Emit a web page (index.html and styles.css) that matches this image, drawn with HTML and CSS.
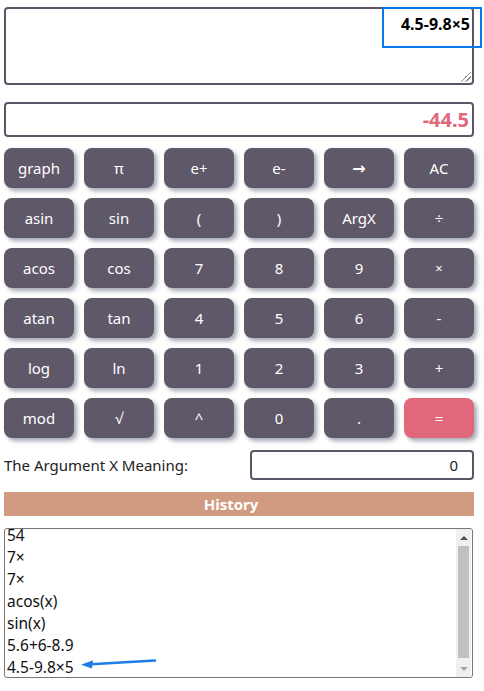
FILE: index.html
```html
<!DOCTYPE html>
<html>
<head>
<meta charset="utf-8">
<link rel="stylesheet" href="styles.css">
</head>
<body>
<div class="app">
  <div class="expr-wrap">
    <div class="expr">4.5-9.8×5<span class="grip"></span></div>
    <div class="highlight"></div>
  </div>
  <div class="result">-44.5</div>
  <div class="keys">
    <button class="key">graph</button>
    <button class="key">π</button>
    <button class="key">e+</button>
    <button class="key">e-</button>
    <button class="key arrow-key">→</button>
    <button class="key">AC</button>
    <button class="key">asin</button>
    <button class="key">sin</button>
    <button class="key">(</button>
    <button class="key">)</button>
    <button class="key">ArgX</button>
    <button class="key">÷</button>
    <button class="key">acos</button>
    <button class="key">cos</button>
    <button class="key">7</button>
    <button class="key">8</button>
    <button class="key">9</button>
    <button class="key small">×</button>
    <button class="key">atan</button>
    <button class="key">tan</button>
    <button class="key">4</button>
    <button class="key">5</button>
    <button class="key">6</button>
    <button class="key">-</button>
    <button class="key">log</button>
    <button class="key">ln</button>
    <button class="key">1</button>
    <button class="key">2</button>
    <button class="key">3</button>
    <button class="key">+</button>
    <button class="key">mod</button>
    <button class="key">√</button>
    <button class="key">^</button>
    <button class="key">0</button>
    <button class="key">.</button>
    <button class="key eq">=</button>
  </div>
  <div class="arg-row">
    <span class="arg-label">The Argument X Meaning:</span>
    <div class="arg-input">0</div>
  </div>
  <div class="history-bar">History</div>
  <div class="history">
    <div class="items">
      <div class="item">54</div>
      <div class="item">7×</div>
      <div class="item">7×</div>
      <div class="item">acos(x)</div>
      <div class="item">sin(x)</div>
      <div class="item">5.6+6-8.9</div>
      <div class="item">4.5-9.8×5</div>
    </div>
    <div class="scrollbar">
      <div class="sb-btn"><span class="tri up"></span></div>
      <div class="sb-track"><div class="sb-thumb"></div></div>
      <div class="sb-btn"><span class="tri down"></span></div>
    </div>
    <svg class="arrow" width="80" height="14" viewBox="0 0 80 14">
      <path d="M76 3.5 L12 7.2" stroke="#1e7de6" stroke-width="2.4" stroke-linecap="round" fill="none"/>
      <path d="M2 7.8 L14 3.2 L13 11.6 Z" fill="#1e7de6"/>
    </svg>
  </div>
</div>
</body>
</html>
```
FILE: styles.css
```css
* { box-sizing: border-box; }
html, body { margin: 0; padding: 0; background: #fff; }
body { font-family: "Noto Sans", "Open Sans", sans-serif; }
.app {
  width: 470px;
  margin: 7px 0 0 4px;
  display: flex;
  flex-direction: column;
}
.expr-wrap { position: relative; }
.expr {
  height: 78px;
  border: 2px solid #5c5566;
  border-radius: 4px;
  text-align: right;
  padding: 4px 2px 0 0;
  font-weight: 700;
  font-size: 16px;
  line-height: 22px;
  color: #000;
  position: relative;
}
.grip {
  position: absolute;
  right: 1px;
  bottom: 1px;
  width: 10px;
  height: 10px;
  background: linear-gradient(135deg, transparent 45%, #888 45%, #888 52%, transparent 52%, transparent 68%, #888 68%, #888 75%, transparent 75%);
}
.highlight {
  position: absolute;
  left: 378px;
  top: 0;
  width: 100px;
  height: 41px;
  border: 2.5px solid #0a78e8;
}
.result {
  margin-top: 17px;
  height: 35px;
  border: 2px solid #5c5566;
  border-radius: 4px;
  text-align: right;
  padding: 2px 3px 0 0;
  font-weight: 700;
  font-size: 20px;
  line-height: 28px;
  color: #e0687a;
}
.keys {
  margin-top: 11px;
  display: grid;
  grid-template-columns: repeat(6, 70px);
  grid-auto-rows: 40px;
  gap: 10px;
}
.key {
  border: none;
  margin: 0;
  padding: 0;
  background: #5f5868;
  color: #fff;
  font-family: "Noto Sans", "Open Sans", sans-serif;
  font-size: 15px;
  border-radius: 8px;
  box-shadow: 3px 3px 4px rgba(90, 100, 120, 0.55);
}
.key.small { font-size: 13px; }
.key.arrow-key { font-family: "DejaVu Sans", sans-serif; font-size: 16px; font-weight: 700; }
.key.eq { background: #e0687a; }
.arg-row {
  margin-top: 12px;
  display: flex;
  align-items: center;
  justify-content: space-between;
}
.arg-label {
  font-size: 15px;
  color: #222;
}
.arg-input {
  width: 224px;
  height: 30px;
  border: 2px solid #5c5566;
  border-radius: 4px;
  text-align: right;
  padding: 2px 14px 0 0;
  font-size: 15px;
  line-height: 22px;
  color: #222;
}
.history-bar {
  margin-top: 12px;
  height: 24px;
  background: #d09b80;
  color: #fff;
  font-weight: 700;
  font-size: 15px;
  line-height: 24px;
  text-align: center;
  padding-right: 16px;
}
.history {
  margin-top: 12px;
  width: 469px;
  height: 150px;
  border: 1px solid #777;
  border-radius: 3px;
  display: flex;
  overflow: hidden;
  position: relative;
}
.items {
  flex: 1;
  margin-top: -5px;
  padding-left: 2px;
}
.item {
  height: 22px;
  font-size: 15.5px;
  line-height: 22px;
  color: #111;
}
.scrollbar {
  width: 15px;
  margin: 0 1px 0 0;
  background: #f0f0f0;
  display: flex;
  flex-direction: column;
}
.sb-btn {
  height: 17px;
  display: flex;
  align-items: center;
  justify-content: center;
}
.sb-track { flex: 1; display: flex; padding: 0 2px; }
.sb-thumb { flex: 1; background: #c1c1c1; margin: 0 0 2px; }
.tri { width: 0; height: 0; border-left: 4px solid transparent; border-right: 4px solid transparent; }
.tri.up { border-bottom: 4px solid #505050; }
.tri.down { border-top: 4px solid #a3a3a3; }
.arrow {
  position: absolute;
  left: 74px;
  top: 128px;
}
```
